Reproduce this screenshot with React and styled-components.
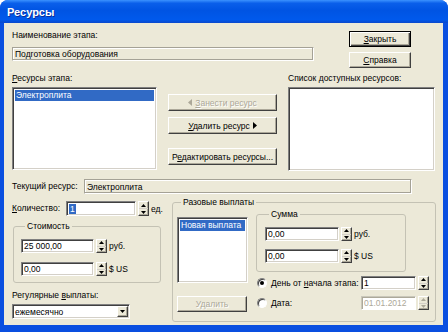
import React from "react";
import styled, { createGlobalStyle, css } from "styled-components";

const GlobalStyle = createGlobalStyle`
  html, body { margin: 0; padding: 0; background: #fff; }
  body { font-family: "Liberation Sans", Arial, sans-serif; font-size: 8.5px; color: #000; }
  * { box-sizing: border-box; }
`;

const Frame = styled.div`
  width: 448px;
  height: 332px;
  display: flex;
  flex-direction: column;
  background: #0a4fe0;
  border-radius: 8px 8px 0 0;
  overflow: hidden;
`;

const TitleBar = styled.div`
  flex: none;
  height: 23px;
  padding-left: 7px;
  display: flex;
  align-items: center;
  background: linear-gradient(to bottom, #3b92ff 0%, #0a5fea 14%, #0054e3 45%, #0059ec 85%, #0a48cc 100%);
  color: #fff;
  font-size: 11px;
  font-weight: bold;
  text-shadow: 1px 1px 0 #0a2f9a;
`;

const Body = styled.div`
  flex: 1;
  margin: 0 5px 7px 4px;
  background: #ece9d8;
  padding-left: 8px;
  display: flex;
  flex-direction: column;
`;

const Row = styled.div`
  display: flex;
  align-items: ${p => p.$align || "flex-start"};
  margin-top: ${p => p.$mt || 0}px;
  margin-left: ${p => p.$ml || 0}px;
`;

const Col = styled.div`
  flex: none;
  display: flex;
  flex-direction: column;
  width: ${p => (p.$w ? p.$w + "px" : "auto")};
  margin-left: ${p => p.$ml || 0}px;
  padding-top: ${p => p.$pt || 0}px;
`;

const Label = styled.div`
  flex: none;
  height: 11px;
  line-height: 11px;
  white-space: nowrap;
  width: ${p => (p.$w ? p.$w + "px" : "auto")};
  margin-top: ${p => p.$mt || 0}px;
  margin-left: ${p => p.$ml || 0}px;
`;

const Edit = styled.div`
  flex: none;
  width: ${p => p.$w}px;
  height: ${p => p.$h || 14}px;
  margin-top: ${p => p.$mt || 0}px;
  padding-left: 2px;
  display: flex;
  align-items: center;
  white-space: nowrap;
  overflow: hidden;
  background: #fff;
  color: ${p => (p.$disabled ? "#aca899" : "#000")};
  border: 1px solid;
  border-color: #808080 #fff #fff #808080;
  box-shadow: inset 1px 1px 0 #404040, inset -1px -1px 0 #d4d0c8;
  ${p =>
    p.$ro &&
    css`
      background: #ece9d8;
      border-color: #a5a296 #fff #fff #a5a296;
      box-shadow: inset -1px -1px 0 #a5a296, inset 1px 1px 0 #fff;
    `}
  ${p =>
    p.$disabled &&
    css`
      background: #fff;
      border-color: #c9c7ba #fff #fff #c9c7ba;
      box-shadow: inset 1px 1px 0 #aca899;
    `}
`;

const Selected = styled.span`
  background: #316ac5;
  color: #fff;
  padding: 0 1px;
`;

const Spin = styled.div`
  flex: none;
  width: 11px;
  height: ${p => p.$h || 14}px;
  margin-left: 2px;
  display: flex;
  flex-direction: column;
  background: #ece9d8;
  border: 1px solid;
  border-color: #fff #404040 #404040 #fff;
  box-shadow: inset -1px -1px 0 #aca899;
`;

const SpinHalf = styled.div`
  flex: 1;
  display: flex;
  align-items: center;
  justify-content: center;
  & + & { border-top: 1px solid #d4d0c8; }
`;

const Unit = styled.span`
  margin-left: 2px;
  white-space: nowrap;
`;

const Button = styled.div`
  flex: none;
  width: ${p => p.$w}px;
  height: ${p => p.$h || 17}px;
  margin-top: ${p => p.$mt || 0}px;
  display: flex;
  align-items: center;
  justify-content: center;
  gap: 3px;
  white-space: nowrap;
  background: #ece9d8;
  border: 1px solid;
  border-color: #fff #404040 #404040 #fff;
  box-shadow: inset -1px -1px 0 #aca899;
  color: ${p => (p.$disabled ? "#aca899" : "#000")};
  text-shadow: ${p => (p.$disabled ? "1px 1px 0 #fff" : "none")};
  ${p =>
    p.$default &&
    css`
      border-color: #000;
      box-shadow: inset 1px 1px 0 #fff, inset -1px -1px 0 #404040, inset -2px -2px 0 #aca899;
    `}
`;

const ListBox = styled.div`
  flex: none;
  width: ${p => p.$w}px;
  height: ${p => p.$h}px;
  margin-top: ${p => p.$mt || 0}px;
  padding: 2px;
  background: #fff;
  border: 1px solid;
  border-color: #808080 #fff #fff #808080;
  box-shadow: inset 1px 1px 0 #404040, inset -1px -1px 0 #d4d0c8;
`;

const ListItem = styled.div`
  height: 11px;
  line-height: 11px;
  padding-left: 1px;
  white-space: nowrap;
  background: ${p => (p.$sel ? "#316ac5" : "transparent")};
  color: ${p => (p.$sel ? "#fff" : "#000")};
`;

const Group = styled.fieldset`
  flex: none;
  margin: ${p => p.$mt || 0}px 0 0 ${p => p.$ml || 0}px;
  width: ${p => p.$w}px;
  height: ${p => (p.$h ? p.$h + "px" : "auto")};
  min-width: 0;
  padding: ${p => p.$pad || "0"};
  border: 1px solid #c4c2b4;
  border-radius: 3px;
`;

const Legend = styled.legend`
  height: 11px;
  line-height: 11px;
  padding: 0 2px;
  margin-left: 4px;
`;

const FieldRow = styled.div`
  display: flex;
  align-items: center;
  margin-top: ${p => p.$mt || 0}px;
`;

const Radio = styled.span`
  flex: none;
  width: 10px;
  height: 10px;
  border-radius: 50%;
  background: #fff;
  border: 1px solid;
  border-color: #808080 #fff #fff #808080;
  box-shadow: inset 1px 1px 0 #404040;
  display: flex;
  align-items: center;
  justify-content: center;
  &::after {
    content: "";
    width: 4px;
    height: 4px;
    border-radius: 50%;
    background: ${p => (p.$on ? "#000" : "transparent")};
  }
`;

const RadioLabel = styled.div`
  flex: none;
  width: 104px;
  margin-left: 1px;
  display: flex;
  align-items: center;
  gap: 4px;
  white-space: nowrap;
`;

const DropButton = styled.div`
  width: 11px;
  height: 11px;
  margin-left: auto;
  margin-right: 1px;
  display: flex;
  align-items: center;
  justify-content: center;
  background: #ece9d8;
  border: 1px solid;
  border-color: #fff #404040 #404040 #fff;
  box-shadow: inset -1px -1px 0 #aca899;
`;

const Tri = ({ dir = "up", color = "#000", size = 5 }) => {
  const h = Math.ceil(size / 2);
  const pts = {
    up: `0,${h} ${size / 2},0 ${size},${h}`,
    down: `0,0 ${size / 2},${h} ${size},0`,
    left: `${h},0 0,${size / 2} ${h},${size}`,
    right: `0,0 ${h},${size / 2} 0,${size}`,
  }[dir];
  const horiz = dir === "left" || dir === "right";
  return (
    <svg width={horiz ? h : size} height={horiz ? size : h} style={{ display: "block" }}>
      <polygon points={pts} fill={color} />
    </svg>
  );
};

const Spinner = ({ h, disabled }) => (
  <Spin $h={h}>
    <SpinHalf>
      <Tri dir="up" size={5} color={disabled ? "#aca899" : "#000"} />
    </SpinHalf>
    <SpinHalf>
      <Tri dir="down" size={5} color={disabled ? "#aca899" : "#000"} />
    </SpinHalf>
  </Spin>
);

export default function App() {
  return (
    <>
      <GlobalStyle />
      <Frame>
        <TitleBar>Ресурсы</TitleBar>
        <Body>
          {/* stage name + close / help */}
          <Row>
            <Col $w={302} $pt={7}>
              <Label>Наименование этапа:</Label>
              <Edit $ro $w={302} $mt={6}>Подготовка оборудования</Edit>
            </Col>
            <Col $ml={35} $pt={8}>
              <Button $default $w={62} $h={16}>
                <span><u>З</u>акрыть</span>
              </Button>
              <Button $w={62} $h={16} $mt={5}>
                <span><u>С</u>правка</span>
              </Button>
            </Col>
          </Row>

          {/* resources */}
          <Row>
            <Col $w={145}>
              <Label $mt={5}><u>Р</u>есурсы этапа:</Label>
              <ListBox $w={145} $h={83} $mt={3}>
                <ListItem $sel>Электроплита</ListItem>
              </ListBox>
            </Col>
            <Col $w={109} $ml={11} $pt={26}>
              <Button $w={109} $disabled>
                <Tri dir="left" size={7} color="#aca899" />
                <span><u>З</u>анести ресурс</span>
              </Button>
              <Button $w={109} $mt={6}>
                <span><u>У</u>далить ресурс</span>
                <Tri dir="right" size={7} />
              </Button>
              <Button $w={109} $mt={14}>
                <span>Р<u>е</u>дактировать ресурсы...</span>
              </Button>
            </Col>
            <Col $w={147} $ml={11}>
              <Label $mt={5}>Список <u>д</u>оступных ресурсов:</Label>
              <ListBox $w={147} $h={84} $mt={3} />
            </Col>
          </Row>

          <Row $align="center" $mt={8}>
            <Label $w={72}>Текущий ресурс:</Label>
            <Edit $ro $w={328} $h={15}>Электроплита</Edit>
          </Row>

          {/* bottom part */}
          <Row>
            <Col $w={150}>
              <FieldRow $mt={7}>
                <Label $w={54}><u>К</u>оличество:</Label>
                <Edit $w={70} $h={15}><Selected>1</Selected></Edit>
                <Spinner h={15} />
                <Unit>ед.</Unit>
              </FieldRow>
              <Group $w={148} $ml={1} $mt={5} $pad="7px 0 6px 7px">
                <Legend>Стоимость</Legend>
                <FieldRow>
                  <Edit $w={73}>25 000,00</Edit>
                  <Spinner />
                  <Unit>руб.</Unit>
                </FieldRow>
                <FieldRow $mt={9}>
                  <Edit $w={73}>0,00</Edit>
                  <Spinner />
                  <Unit>$ US</Unit>
                </FieldRow>
              </Group>
              <Label $mt={7}>Регулярные <u>в</u>ыплаты:</Label>
              <Edit $w={118} $h={15} $mt={3}>
                ежемесячно
                <DropButton>
                  <Tri dir="down" size={5} />
                </DropButton>
              </Edit>
            </Col>

            <Group $w={264} $h={125} $ml={10} $mt={3} $pad="1px 0 0 4px">
              <Legend>Разовые выплаты</Legend>
              <Row>
                <Col $w={71}>
                  <ListBox $w={71} $h={66} $mt={8}>
                    <ListItem $sel>Новая выплата</ListItem>
                  </ListBox>
                  <Button $w={70} $h={16} $mt={13} $disabled>
                    Удалить
                  </Button>
                </Col>
                <Col $ml={8}>
                  <Group $w={150} $pad="7px 0 8px 8px">
                    <Legend>Сумма</Legend>
                    <FieldRow>
                      <Edit $w={74}>0,00</Edit>
                      <Spinner />
                      <Unit>руб.</Unit>
                    </FieldRow>
                    <FieldRow $mt={8}>
                      <Edit $w={74}>0,00</Edit>
                      <Spinner />
                      <Unit>$ US</Unit>
                    </FieldRow>
                  </Group>
                  <FieldRow $mt={4}>
                    <RadioLabel>
                      <Radio $on />
                      <span>День от <u>н</u>ачала этапа:</span>
                    </RadioLabel>
                    <Edit $w={55}>1</Edit>
                    <Spinner />
                  </FieldRow>
                  <FieldRow $mt={6}>
                    <RadioLabel>
                      <Radio />
                      <span><u>Д</u>ата:</span>
                    </RadioLabel>
                    <Edit $w={55} $disabled>01.01.2012</Edit>
                    <Spinner disabled />
                  </FieldRow>
                </Col>
              </Row>
            </Group>
          </Row>
        </Body>
      </Frame>
    </>
  );
}
